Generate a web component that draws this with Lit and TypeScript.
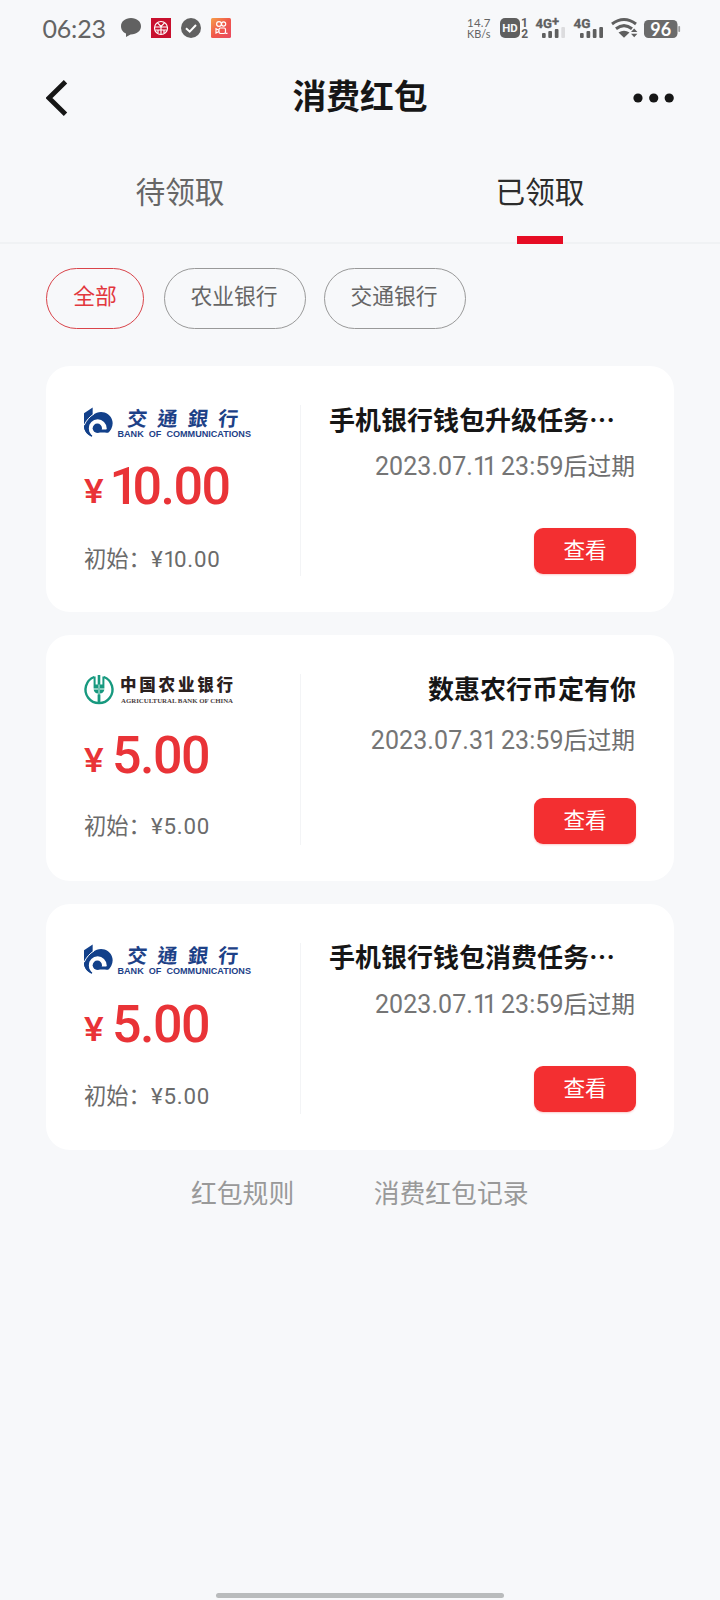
import { LitElement, html, css, svg } from "lit";
import { customElement, property } from "lit/decorators.js";

const FONT = css`Roboto, "Noto Sans CJK SC", "Noto Sans", sans-serif`;

type Coupon = {
  bank: "bocom" | "abc";
  amount: string;
  title: string;
  date: string;
  variant: string;
};

const COUPONS: Coupon[] = [
  { bank: "bocom", amount: "10.00", title: "手机银行钱包升级任务…", date: "2023.07.11 23:59", variant: "first" },
  { bank: "abc", amount: "5.00", title: "数惠农行币定有你", date: "2023.07.31 23:59", variant: "second" },
  { bank: "bocom", amount: "5.00", title: "手机银行钱包消费任务…", date: "2023.07.11 23:59", variant: "third" },
];

// The digit 1 is set tighter than the other figures.
const figures = (s: string) =>
  s.split(/(1)/).map((p) => (p === "1" ? html`<span class="one">1</span>` : p));

@customElement("bank-logo")
class BankLogo extends LitElement {
  @property() bank = "bocom";
  static styles = css`
    :host { display: block; width: 170px; height: 32px; }
    svg { display: block; overflow: visible; }
    .hanzi { font: 700 20px "Noto Sans CJK TC", sans-serif; fill: #1d4187; }
    .latin { font: 700 8.3px "Liberation Sans", sans-serif; fill: #1d4187; white-space: pre; }
    .abc { font: 900 16.5px "Liberation Serif", "Noto Sans CJK SC", serif; fill: #2b211f; }
    .abc-latin { font: 700 6.6px "Liberation Serif", serif; fill: #4a403e; }
  `;
  render() {
    return this.bank === "abc"
      ? html`<svg width="170" height="32" viewBox="0 0 170 32">
          <path fill="none" stroke="#17997f" stroke-width="2.4" d="M10.2 2A13.5 13.5 0 1 0 19.800 2" />
          <path fill="#17997f" d="M13.700 0H16.300V9.500H13.700zM9.600 1.500H11.600V9.500H9.600zM18.400 1.500H20.400V9.500H18.400zM9.600 9.500H14V13.600H9.600zM16 9.500H20.400V13.600H16zM9.600 14.600H14V18.600Q10.500 18.400 9.600 14.600zM20.400 14.600H16V18.600Q19.500 18.400 20.400 14.600zM13.600 19.400H16.400V28H13.600zM14.400 9H15.600V20H14.400z" />
          ${[..."中国农业银行"].map((c, i) => svg`<text class="abc" x=${36 + i * 19.3} y="15.6">${c}</text>`)}
          <text class="abc-latin" x="37" y="27.6" textLength="112" lengthAdjust="spacingAndGlyphs">AGRICULTURAL BANK OF CHINA</text>
        </svg>`
      : html`<svg width="170" height="32" viewBox="0 0 170 32">
          <g transform="translate(0 -.4) scale(.3333)">
            <path fill="#12408a" d="M0 17L26 0V22C38 13 52 11 62 15C77 20 86 34 86 47C86 59 80 69 72 76L48 80L25 88C9 81 0 70 0 56Z" />
            <path fill="none" stroke="#fff" stroke-width="3" d="M30 19C17 27 7 38 0 54" />
            <circle cx="41" cy="62" r="27" fill="#fff" />
            <path fill="#fff" d="M20 92L30 75H90V92Z" />
            <circle cx="40" cy="62" r="14" fill="#12408a" />
            <path fill="#12408a" d="M42 66H80L73 75H42Z" />
            <path fill="#12408a" d="M0 54C0 70 9 81 25 88C15 78 11 66 16 54Z" />
          </g>
          <g transform="skewX(-6)">
            ${["交", "通", "銀", "行"].map((c, i) => svg`<text class="hanzi" x=${44.5 + i * 30.3} y="18.4">${c}</text>`)}
          </g>
          <text class="latin" x="33.5" y="29" textLength="133.5" lengthAdjust="spacingAndGlyphs">BANK&nbsp; OF&nbsp; COMMUNICATIONS</text>
        </svg>`;
  }
}

@customElement("coupon-card")
class CouponCard extends LitElement {
  @property({ attribute: false }) coupon!: Coupon;
  static styles = css`
    :host { display: block; font-family: ${FONT}; }
    .card {
      box-sizing: border-box; height: 246px; padding: 0 38px; border-radius: 24px;
      background: #fff; display: grid; grid-template-columns: 216px 1px 1fr;
    }
    .left, .right { display: flex; flex-direction: column; }
    .logo { height: 48.5px; padding-top: 42px; }
    .second .logo { padding-top: 40px; height: 50.5px; }
    .third .logo { padding-top: 41px; height: 49.5px; }
    .amount { height: 60px; line-height: 60px; display: flex; align-items: baseline; color: #e93337; font-weight: 500; white-space: nowrap; }
    .yen { font-size: 33px; width: 28px; transform: translateY(-1px) scaleX(1.12); transform-origin: 0 50%; }
    .num { font-size: 52px; letter-spacing: -1.5px; }
    .num .one { letter-spacing: -6.500px; margin-left: -2.500px; }
    .init { margin-top: 27px; height: 30px; line-height: 30px; font-size: 22.3px; color: #6b6b6b; white-space: pre; }
    .cost { letter-spacing: .8px; }
    .cost .one { letter-spacing: -2px; }
    .second .init { margin-top: 25.5px; }
    .third .init { margin-top: 26.5px; }
    .rule { background: #f3f4f6; margin: 39px 0 36px; }
    .right { align-items: flex-end; }
    .title { font-family: "Noto Sans CJK SC", sans-serif; margin-top: 33px; height: 40px; line-height: 40px; font-size: 26px; font-weight: 700; color: #161616; width: 307px; margin-left: -30px; text-align: right; white-space: nowrap; }
    .first .title, .third .title { text-align: left; }
    .second .title { margin-top: 33px; }
    .third .title { margin-top: 32px; }
    .date { margin-top: 8px; height: 40px; line-height: 40px; font-size: 23.8px; color: #6e6e6e; white-space: nowrap; margin-right: 1px; }
    .digits { font-size: 25px; letter-spacing: .08px; word-spacing: 1.5px; color: #757575; }
    .second .date { margin-top: 13px; }
    .third .date { margin-top: 9px; }
    .date .one { letter-spacing: -4px; }
    .btn { margin: 41px 0 0; width: 102px; height: 46px; line-height: 46px; border-radius: 9px; background: #f32f31; color: #fff; font-size: 21.6px; text-align: center; box-shadow: 0 1px 2px #f32f3140; }
    .second .btn { margin-top: 37px; }
  `;
  render() {
    const c = this.coupon;
    return html`<article class="card ${c.variant}">
      <div class="left">
        <div class="logo"><bank-logo bank=${c.bank}></bank-logo></div>
        <div class="amount"><span class="yen">¥</span><span class="num">${figures(c.amount)}</span></div>
        <div class="init">初始：<span class="cost">¥${figures(c.amount)}</span></div>
      </div>
      <div class="rule"></div>
      <div class="right">
        <div class="title">${c.title}</div>
        <div class="date"><span class="digits">${figures(c.date)}</span>后过期</div>
        <div class="btn">查看</div>
      </div>
    </article>`;
  }
}

@customElement("status-bar")
class StatusBar extends LitElement {
  static styles = css`
    :host { display: block; height: 56px; }
    svg { display: block; }
    .time { font: 400 25px Lato, sans-serif; fill: #646464; }
    .net { font: 400 11.5px Lato, sans-serif; fill: #646464; }
    .gen { font: 700 13px Roboto, sans-serif; fill: #5f5f5f; stroke: #5f5f5f; stroke-width: .3px; }
    .hd { font: 700 11px Roboto, sans-serif; fill: #f7f8fa; }
    .sim { font: 700 12px Roboto, sans-serif; fill: #5f5f5f; }
    .batt { font: 700 18px Lato, sans-serif; fill: #fff; }
  `;
  render() {
    return html`<svg width="720" height="56" viewBox="0 0 720 56">
      <defs>
        <linearGradient id="sunset" x1="0" y1="0" x2="1" y2="1">
          <stop offset="0" stop-color="#f6a04a" /><stop offset=".5" stop-color="#f0584a" /><stop offset="1" stop-color="#ea4a62" />
        </linearGradient>
      </defs>
      <text class="time" x="42.5" y="38" textLength="63.5">06:23</text>
      <path fill="#616161" d="M131 18C125 18 121 21.600 121 26.300C121 30 123.300 32.500 126 33.500V37L130.500 34.500C136.600 34.600 141 31 141 26.300C141 21.600 137 18 131 18Z" />
      <rect x="151" y="18" width="20" height="20" fill="#c8102e" />
      <g fill="none" stroke="#fff" stroke-width="1.2">
        <circle cx="161" cy="28" r="6.500" />
        <path d="M157.500 22.800L161 26.300L164.500 22.800M161 26V34M155 27H167M155.500 30H166.500M158 30V33M164 30V33" />
      </g>
      <circle cx="191" cy="28" r="10" fill="#616161" />
      <path d="M186 28.200L189.700 31.700L196 25" fill="none" stroke="#fff" stroke-width="2" />
      <rect x="211" y="18" width="20" height="20" rx="1.500" fill="url(#sunset)" />
      <g fill="none" stroke="#fff" stroke-width="1.200">
        <circle cx="219" cy="24" r="2.400" /><circle cx="223.600" cy="24" r="2.100" />
        <rect x="219" y="28" width="6.500" height="5.500" rx="1.400" />
        <path d="M219 30.300L216 28.800V33L219 31.500M225.500 33.400H227.500" />
      </g>
      <text class="net" x="467" y="27.300" textLength="23.500">14.7</text>
      <text class="net" x="467" y="38" textLength="23.500" lengthAdjust="spacingAndGlyphs">KB/s</text>
      <rect x="500" y="18" width="20" height="20" rx="5" fill="#5f5f5f" />
      <text class="hd" x="502.200" y="32" textLength="15.500" lengthAdjust="spacingAndGlyphs">HD</text>
      <text class="sim" x="521" y="26.500">1</text><text class="sim" x="521.300" y="37.800">2</text>
      <text class="gen" x="535.500" y="27.500" textLength="16.500" lengthAdjust="spacingAndGlyphs">4G</text><text class="gen" x="552" y="25.500">+</text>
      <text class="gen" x="573.500" y="27.500" textLength="17" lengthAdjust="spacingAndGlyphs">4G</text>
      <g fill="#5f5f5f">
        <rect x="542" y="33" width="3.700" height="5" rx="1" /><rect x="548.300" y="31" width="3.700" height="7" rx="1" /><rect x="554.800" y="29" width="3.700" height="9" rx="1" />
        <rect x="580" y="33" width="3.700" height="5" rx="1" /><rect x="586.500" y="31" width="3.700" height="7" rx="1" /><rect x="592.800" y="29" width="3.700" height="9" rx="1" /><rect x="599.300" y="27" width="3.700" height="11" rx="1" />
      </g>
      <rect x="561.300" y="27" width="3.700" height="11" rx="1" fill="#dcdcde" />
      <g fill="none" stroke="#5f5f5f" stroke-width="3">
        <path d="M612 24Q624 15 636 24M616 28.800Q624 22.500 632 28.800" />
      </g>
      <path fill="#5f5f5f" d="M618.500 32.500Q624 29 629.500 32.500L624 37.800ZM631 32L634.200 28.500L637.400 32ZM631 33.800H637.400L634.200 37.300Z" />
      <rect x="644" y="20" width="33.500" height="18" rx="4.500" fill="#6b6b6b" />
      <rect x="678.300" y="26" width="1.800" height="6" rx=".8" fill="#9a9a9a" />
      <text class="batt" x="650.300" y="35.600">96</text>
    </svg>`;
  }
}

@customElement("app-root")
class AppRoot extends LitElement {
  static styles = css`
    :host { display: flex; flex-direction: column; width: 720px; height: 1600px; overflow: hidden; background: #f7f8fa; font-family: ${FONT}; }
    .nav { height: 84px; display: grid; grid-template-columns: 46px 60px 1fr 60px 46px; align-items: center; }
    .nav svg { display: block; }
    .back { grid-column: 2; }
    .heading { grid-column: 3; margin: 0; text-align: center; font-size: 33.8px; font-weight: 700; line-height: 80px; color: #161616; }
    .more { grid-column: 4; justify-self: end; }
    .tabs { height: 104px; box-sizing: border-box; border-bottom: 2px solid #f0f2f4; display: grid; grid-template-columns: 1fr 1fr; }
    .tab { display: flex; flex-direction: column; align-items: center; height: 104px; color: #666; font-size: 29.7px; line-height: 106px; }
    .tab.active { color: #2c2c2c; }
    .bar { width: 46px; height: 8px; margin-top: -10px; background: #e60c24; }
    .chips { display: flex; margin: 24px 0 0 46px; height: 61px; }
    .chip { box-sizing: border-box; width: 142px; height: 61px; line-height: 56px; border: 1px solid #999; border-radius: 31px; text-align: center; font-size: 21.8px; color: #666; margin-right: 18px; padding-right: 2px; }
    .chip.on { width: 98px; margin-right: 20px; padding: 0; border-color: #d9444a; color: #e2373d; }
    .list { display: flex; flex-direction: column; gap: 23px; padding: 37px 46px 0; }
    .links { display: flex; margin: 24px 0 0 191px; gap: 79.500px; font-size: 25.800px; line-height: 40px; color: #999; flex: 1; }
    .home { align-self: center; width: 288px; height: 5px; border-radius: 3px; background: #b9bbbc; margin-bottom: 2px; }
  `;
  render() {
    return html`
      <status-bar></status-bar>
      <header class="nav">
        <svg class="back" width="24" height="36" viewBox="0 0 24 36"><path d="M19.500 1.700L3 18L19.500 34.300" fill="none" stroke="#161616" stroke-width="4.800" /></svg>
        <h1 class="heading">消费红包</h1>
        <svg class="more" width="42" height="10" viewBox="0 0 42 10" fill="#161616"><circle cx="6" cy="5" r="4.600" /><circle cx="21.700" cy="5" r="4.600" /><circle cx="37.200" cy="5" r="4.600" /></svg>
      </header>
      <nav class="tabs">
        <div class="tab">待领取</div>
        <div class="tab active">已领取<div class="bar"></div></div>
      </nav>
      <div class="chips">
        <div class="chip on">全部</div>
        <div class="chip">农业银行</div>
        <div class="chip">交通银行</div>
      </div>
      <main class="list">${COUPONS.map((c) => html`<coupon-card .coupon=${c}></coupon-card>`)}</main>
      <footer class="links"><span>红包规则</span><span>消费红包记录</span></footer>
      <div class="home"></div>`;
  }
}
